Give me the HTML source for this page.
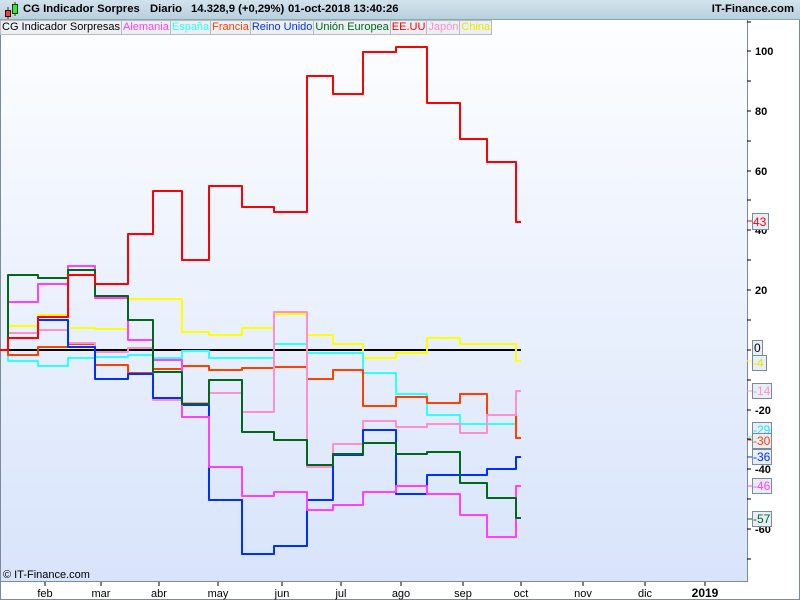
<!DOCTYPE html>
<html><head><meta charset="utf-8"><style>
body{margin:0;width:800px;height:600px;overflow:hidden;background:#fff;font-family:"Liberation Sans",sans-serif;position:relative}
.t{position:absolute;left:0;top:0;width:800px;height:19px;background:linear-gradient(#d3e3ec,#b8d0de);border-bottom:1px solid #8aa}
.t span{position:absolute;top:3px;font-size:11.3px;font-weight:bold;color:#000;white-space:pre}
.lg{position:absolute;top:20px;left:0;height:15px;font-size:11px;display:flex}
.lg div{padding:0 1px;border:1px solid #bbb;background:#ecf0f4;line-height:13px;margin-right:-1px}
</style></head><body>
<svg width="800" height="600" style="position:absolute;left:0;top:0">
<defs><linearGradient id="g" x1="0" y1="0" x2="0" y2="1"><stop offset="0" stop-color="#fdfeff"/><stop offset="1" stop-color="#d8e4fb"/></linearGradient></defs>
<rect x="0" y="20" width="747" height="562" fill="url(#g)"/>
<line x1="747.5" y1="20" x2="747.5" y2="582" stroke="#7a8c99"/>
<line x1="0" y1="581.5" x2="747" y2="581.5" stroke="#7a8c99"/>
<line x1="0.5" y1="20" x2="0.5" y2="600" stroke="#7a8c99"/>
<line x1="0" y1="599.5" x2="800" y2="599.5" stroke="#7a8c99"/>
<line x1="799.5" y1="20" x2="799.5" y2="600" stroke="#7a8c99"/>
<g stroke="#000" stroke-width="1">
<path d="M747 22h4M747 51h4M747 81h4M747 111h4M747 141h4M747 171h4M747 200h4M747 230h4M747 260h4M747 290h4M747 320h4M747 350h4M747 380h4M747 410h4M747 439h4M747 469h4M747 499h4M747 529h4M747 559h4"/>
<path d="M45 582v4M101 582v4M159 582v4M218 582v4M282 582v4M341 582v4M401 582v4M463 582v4M521 582v4M583 582v4M645 582v4M705 582v4"/>
</g>
<g font-size="11" font-weight="bold" fill="#000">
<text x="755" y="55">100</text><text x="755" y="115">80</text><text x="755" y="175">60</text><text x="755" y="234">40</text><text x="755" y="294">20</text><text x="755" y="354">0</text><text x="755" y="414">-20</text><text x="755" y="473">-40</text><text x="755" y="533">-60</text>
</g>
<g font-size="11" fill="#000" text-anchor="middle">
<text x="45" y="597">feb</text><text x="101" y="597">mar</text><text x="159" y="597">abr</text><text x="218" y="597">may</text><text x="282" y="597">jun</text><text x="341" y="597">jul</text><text x="401" y="597">ago</text><text x="463" y="597">sep</text><text x="521" y="597">oct</text><text x="583" y="597">nov</text><text x="645" y="597">dic</text><text x="705" y="597" font-weight="bold" font-size="12">2019</text>
</g>
<text x="3" y="578" font-size="11">© IT-Finance.com</text>
<g fill="none" stroke-width="2" stroke-linejoin="round">
<path stroke="#000" d="M0 350H521"/>
<path stroke="#ffff00" d="M0 350H8V326H38V315H68V328H95V329H128V299H182V332H209V335H242V328H274V314H307V335H333V344H363V358H396V353H427V338H460V344H487V344H516V361H521"/>
<path stroke="#30ffff" d="M0 350H8V361H38V366H68V358H95V357H128V355H153V358H182V351H209V358H274V344H307V353H363V373H396V394H427V415H460V424H516V438H521"/>
<path stroke="#ff4000" d="M0 350H8V355H38V347H68V344H95V365H128V373H153V369H182V366H209V370H242V368H274V367H307V379H333V370H363V406H396V397H427V403H460V394H487V415H516V438H521"/>
<path stroke="#ff90d0" d="M0 350H8V333H38V330H68V343H95V352H128V348H153V400H182V403H209V393H242V412H274V312H307V467H333V444H363V421H396V427H427V424H460V433H487V415H516V391H521"/>
<path stroke="#0030ff" d="M0 350H8V338H38V320H68V347H95V379H128V374H153V398H182V405H209V500H242V554H274V546H307V500H333V455H363V430H396V494H427V475H487V469H516V457H521"/>
<path stroke="#ff40ff" d="M0 350H8V302H38V284H68V266H95V298H128V340H153V360H182V417H209V467H242V496H274V492H307V510H333V505H363V492H396V486H427V494H460V515H487V537H516V486H521"/>
<path stroke="#006818" d="M0 350H8V275H38V278H68V270H95V296H128V320H153V372H182V404H209V380H242V432H274V440H307V465H333V454H363V443H396V454H427V452H460V483H487V498H516V518H521"/>
<path stroke="#ff0000" d="M0 350H8V338H38V317H68V275H95V284H128V234H153V191H182V260H209V186H242V207H274V212H307V76H333V94H363V52H396V47H427V103H460V139H487V162H516V222H521"/>
</g>
<g font-size="12" stroke-width="1">
<path stroke="#ff0000" d="M747 221h5"/><rect x="752.5" y="213.5" width="16" height="16" fill="#e8eef8" stroke="#7a8c99"/><text x="753" y="226" fill="#ff0000">43</text>
<rect x="752.5" y="340.5" width="10" height="15" fill="#e8eef8" stroke="#7a8c99"/><text x="754" y="352" fill="#000">0</text>
<path stroke="#ffff00" d="M747 361h5"/><rect x="752.5" y="355.5" width="14" height="15" fill="#e8eef8" stroke="#7a8c99"/><text x="753" y="367" fill="#e8e800">-4</text>
<path stroke="#ff90d0" d="M747 391h5"/><rect x="752.5" y="383.5" width="19" height="15" fill="#e8eef8" stroke="#7a8c99"/><text x="753" y="395" fill="#ff90d0">-14</text>
<path stroke="#30ffff" d="M747 437h5"/><rect x="752.5" y="422.5" width="19" height="15" fill="#e8eef8" stroke="#7a8c99"/><text x="753" y="434" fill="#20e8f0">-29</text>
<path stroke="#ff4000" d="M747 440h5"/><rect x="752.5" y="433.5" width="19" height="15" fill="#e8eef8" stroke="#7a8c99"/><text x="753" y="445" fill="#ff4000">-30</text>
<path stroke="#0030ff" d="M747 457h5"/><rect x="752.5" y="449.5" width="19" height="15" fill="#e8eef8" stroke="#7a8c99"/><text x="753" y="461" fill="#0030ff">-36</text>
<path stroke="#ff40ff" d="M747 486h5"/><rect x="752.5" y="478.5" width="19" height="15" fill="#e8eef8" stroke="#7a8c99"/><text x="753" y="490" fill="#ff40ff">-46</text>
<path stroke="#006818" d="M747 519h5"/><rect x="752.5" y="511.5" width="19" height="15" fill="#e8eef8" stroke="#7a8c99"/><text x="753" y="523" fill="#006818">-57</text>
</g>
</svg>
<div class="t">
<svg width="18" height="19" style="position:absolute;left:2px;top:0"><path d="M6 7v12M13 2v14" stroke="#333"/><rect x="3.5" y="10.5" width="5" height="6" fill="#f04040" stroke="#400"/><rect x="10.5" y="4.5" width="5" height="9" fill="#40e040" stroke="#040"/></svg>
<span style="left:23px">CG Indicador Sorpres</span><span style="left:150px">Diario</span><span style="left:191px">14.328,9 (+0,29%)</span><span style="left:288px">01-oct-2018 13:40:26</span>
<span style="right:6px">IT-Finance.com</span>
</div>
<div class="lg">
<div style="color:#000">CG Indicador Sorpresas</div><div style="color:#ff40ff">Alemania</div><div style="color:#30ffff">España</div><div style="color:#ff4000">Francia</div><div style="color:#0030ff">Reino Unido</div><div style="color:#006818">Unión Europea</div><div style="color:#ff0000">EE.UU</div><div style="color:#ff90d0">Japón</div><div style="color:#e8e800">China</div>
</div>
</body></html>
